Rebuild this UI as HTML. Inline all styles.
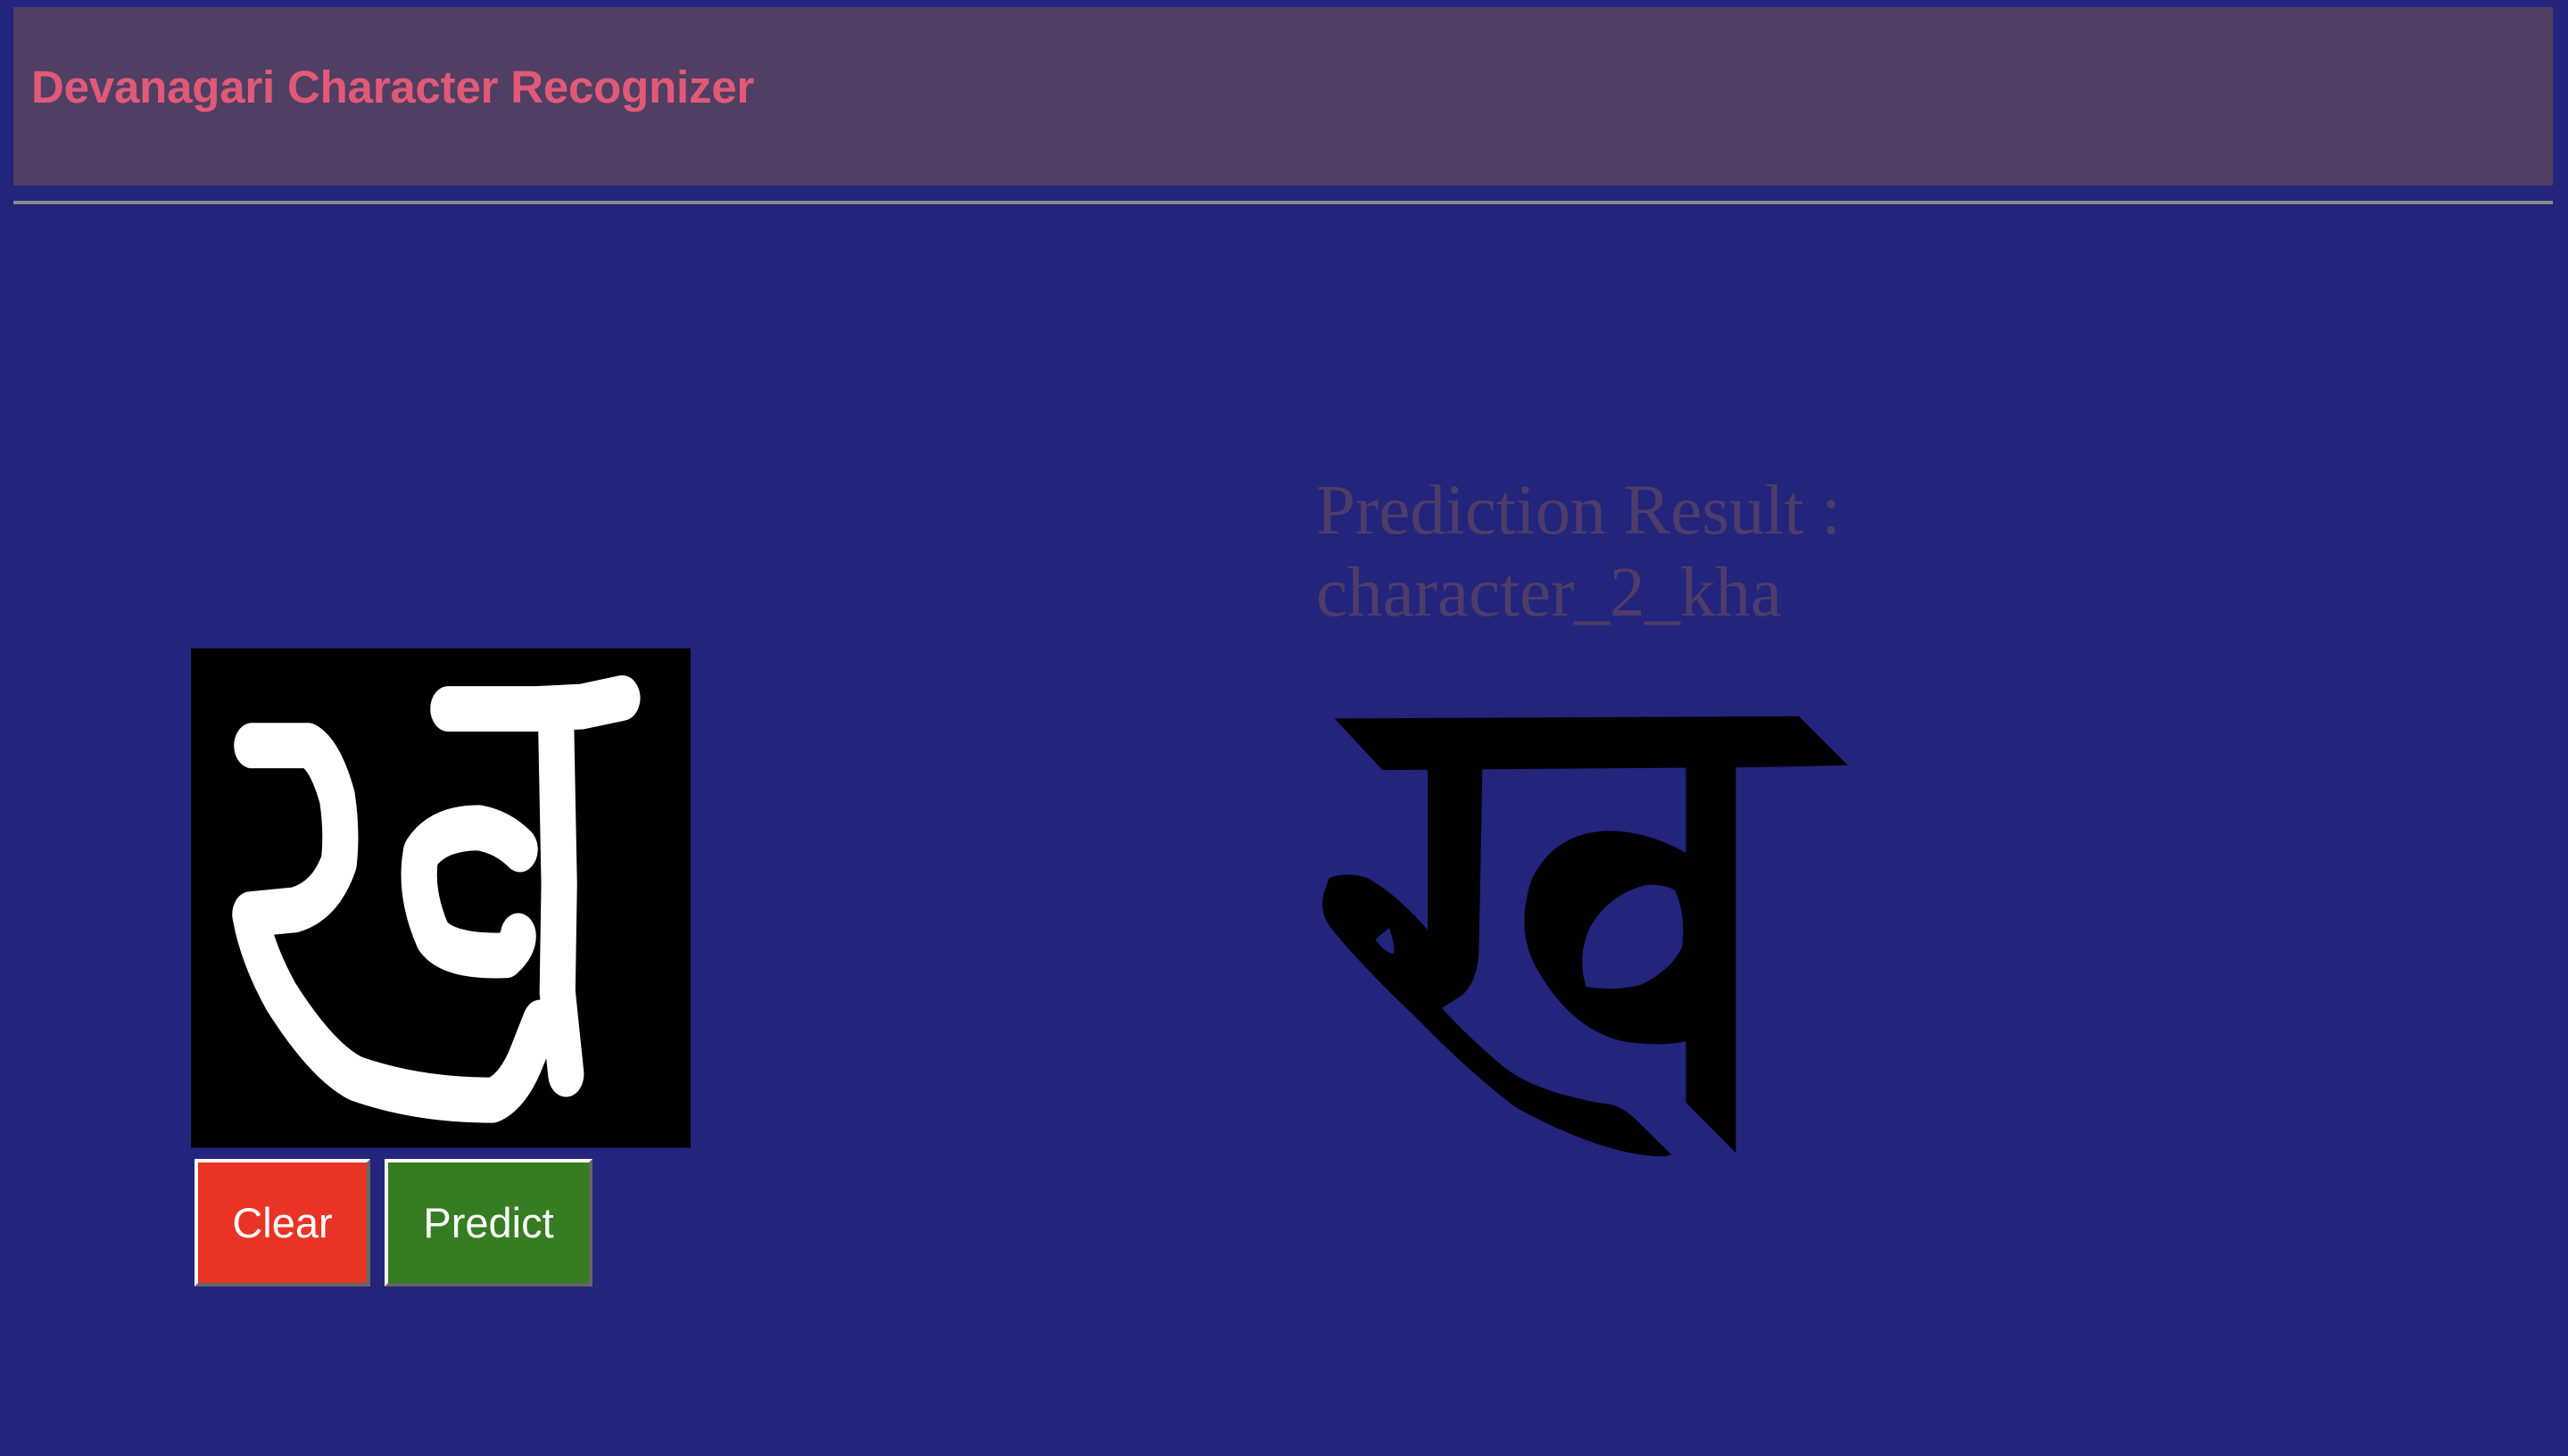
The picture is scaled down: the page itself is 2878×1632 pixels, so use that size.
<!DOCTYPE html>
<html><head><meta charset="utf-8"><style>
html,body{margin:0;padding:0;width:2878px;height:1632px;background:#23247c;overflow:hidden;position:relative;font-family:"Liberation Sans",Arial,sans-serif}
.hdr{position:absolute;left:15px;top:8px;width:2846px;height:200px;background:#513e63}
.hdr h1{position:absolute;left:20px;top:60px;margin:0;font-size:51px;font-weight:bold;color:#e05a78;line-height:60px;white-space:nowrap;letter-spacing:-0.2px}
.line{position:absolute;left:15px;top:225px;width:2846px;height:4px;background:#8a8a8a}
.btn{position:absolute;top:1299px;height:143px;box-sizing:border-box;border:4px solid;border-color:#fff #666 #666 #fff;color:#fff;font-size:47px;display:flex;align-items:center;justify-content:center}
.res{position:absolute;left:1475px;top:527px;font-family:"Liberation Serif",serif;font-size:79px;line-height:92px;color:#4e3d6a;white-space:nowrap}
svg{position:absolute}
</style></head><body>
<div class="hdr"><h1>Devanagari Character Recognizer</h1></div>
<div class="line"></div>

<svg style="left:200px;top:700px" width="600" height="760" viewBox="0 0 1568 1568" preserveAspectRatio="none">
<rect x="37" y="55" width="1463" height="1155" fill="#000"/>
<g fill="none" stroke="#fff" stroke-width="105" stroke-linecap="round" stroke-linejoin="round">
<path d="M790,195 L1050,195 L1180,190 L1300,170"/>
<path d="M1105,195 L1115,600 L1110,850 L1135,1040"/>
<path d="M215,280 L380,280 Q430,300 465,400 Q480,480 470,550 Q430,640 340,660 L210,670 Q230,760 300,860 Q420,1010 520,1050 Q700,1100 920,1100 Q980,1080 1020,1000 L1060,920"/>
<path d="M1000,520 Q950,480 880,470 Q760,470 710,530 Q690,620 745,720 Q790,770 960,765 Q995,740 995,720"/>
</g>
</svg>

<div class="btn" style="left:218px;width:197px;background:#e83325">Clear</div>
<div class="btn" style="left:431px;width:233px;background:#367c22">Predict</div>

<div class="res">Prediction Result :<br>character_2_kha</div>

<svg style="left:1450px;top:500px" width="650" height="830" viewBox="0 0 1568 1568" preserveAspectRatio="none">
<g fill="#000">
<path d="M110,577 L1365,572 L1498,676 L1250,680 L240,686 Z"/>
<path d="M1060,680 L1195,680 L1195,1497 L1060,1390 Z"/>
<path d="M362,680 L510,680 L500,1080 Q490,1150 440,1170 L400,1190 L362,1030 Z"/>
<path fill-rule="evenodd" d="M1062,862 Q950,812 840,815 Q700,822 642,920 Q600,1020 652,1100 Q750,1240 900,1262 Q1000,1272 1062,1260 Z M1030,940 Q990,925 950,930 Q850,950 800,1020 Q765,1080 790,1145 Q870,1155 940,1140 Q1020,1110 1050,1060 Q1060,990 1030,940 Z"/>
<path fill-rule="evenodd" d="M95,915 Q140,900 200,915 Q280,950 362,1025 L400,1190 Q470,1250 560,1310 Q650,1370 860,1395 Q890,1400 930,1430 L1020,1500 Q1000,1510 900,1495 Q760,1470 600,1400 Q480,1330 330,1210 Q170,1090 100,1020 Q70,990 80,950 Z M220,1045 L258,1020 Q275,1060 270,1075 Q250,1075 220,1045 Z"/>
</g>
</svg>
</body></html>
